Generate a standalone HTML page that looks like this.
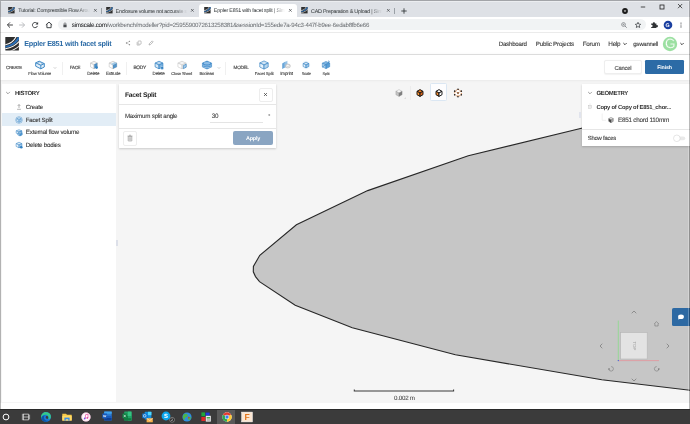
<!DOCTYPE html>
<html>
<head>
<meta charset="utf-8">
<title>Eppler E851 with facet split</title>
<style>
html,body{margin:0;padding:0;}
body{width:690px;height:424px;overflow:hidden;position:relative;background:#f5f5f5;text-rendering:geometricPrecision;font-family:"Liberation Sans",sans-serif;color:#333;}
.a{position:absolute;white-space:nowrap;box-sizing:border-box;}
.t{position:absolute;white-space:nowrap;line-height:1.15;-webkit-text-stroke:0.12px currentColor;}
svg{position:absolute;overflow:visible;}
#tabbar{left:0;top:0;width:690px;height:17px;background:#dee1e6;}
#acttab{left:198.5px;top:3.5px;width:98.5px;height:14px;background:#fff;border-radius:3px 3px 0 0;}
#addr{left:0;top:17px;width:690px;height:16px;background:#fff;}
#pill{left:58px;top:19.3px;width:587.5px;height:11.2px;border-radius:5.6px;background:#f1f3f4;}
#hdr{left:0;top:33px;width:690px;height:22px;background:#fff;border-bottom:1px solid #e4e4e4;}
#tool{left:0;top:55px;width:690px;height:25px;background:#fff;box-shadow:0 0 3px rgba(0,0,0,.09);}
#left{left:1.7px;top:83.8px;width:114px;height:318px;background:#fff;}
#rowsel{left:1.7px;top:113.3px;width:114px;height:12.5px;background:#e2edf6;}
#dlg{left:119.1px;top:83.7px;width:156.6px;height:64.2px;background:#fff;box-shadow:0 0.5px 2px rgba(0,0,0,.18);}
#geo{left:582px;top:84px;width:108px;height:61.5px;background:#fff;box-shadow:0 0.5px 2px rgba(0,0,0,.18);}
#bottom{left:0;top:402.8px;width:690px;height:6.2px;background:#fff;}
#task{left:0;top:409px;width:690px;height:15px;background:#3b3b3b;border-top:1px solid #2a2a2a;}
.sep{width:0.6px;background:#e2e2e2;}
.hl{height:0.6px;background:#e6e6e6;}
</style>
</head>
<body>
<!-- browser chrome -->
<div class="a" id="tabbar"></div>
<div class="a" id="acttab"></div>
<div class="a" id="addr"></div>
<div class="a" id="pill"></div>
<div class="a" style="left:0;top:32px;width:690px;height:1px;background:#ebebeb"></div>
<!-- app -->
<div class="a" id="hdr"></div>
<div class="a" id="tool"></div>
<div class="a" id="left"></div>
<div class="a" id="rowsel"></div>
<!-- viewport geometry -->
<svg id="view" style="left:0;top:0" width="690" height="424" viewBox="0 0 690 424">
<path d="M692 101.5 L582.5 128 L468.3 155.8 L367.7 190.6 L296.4 224.8 L259.8 255.3 L253.4 266.4 L253.3 271.8 L255.5 276.6 L259.5 281.6 L295.2 305.3 L352.3 327.7 L455.4 354.7 L601.8 379.8 L692 390.5 Z" fill="#c6c6c6" stroke="#272727" stroke-width="1.12" stroke-linejoin="miter"/>
<!-- scale bar -->
<path d="M354.3 389.4 V390.9 H453.6 V389.4" fill="none" stroke="#3a3a3a" stroke-width="1.05"/>
</svg>
<div class="a" id="dlg"></div>
<div class="a" id="geo"></div>
<div class="a" style="left:116px;top:240px;width:2px;height:6px;background:#dde0e9"></div><div class="a" style="left:578.6px;top:112px;width:2px;height:6px;background:#e1e4ed"></div>
<svg style="left:8.30px;top:7.20px" width="6.8" height="6.4" viewBox="0 0 14 14"><rect width="14" height="14" fill="#2e2e2e"/><path d="M0 7.2 C4.5 6.4 8.5 3.8 10.2 0 L11.8 0 C9.4 4.6 5 7.8 0 8.7 Z" fill="#fff" opacity=".9"/><path d="M0 9.2 C5.5 8.4 10.5 5 12.8 0 L14 0 L14 3 C11 7.6 5.5 10.5 0 11.2 Z" fill="#2a6fb8"/><path d="M0 11.6 C6 10.8 11 8 14 4.2 L14 5.8 C11 9.2 6 12 0 12.8 Z" fill="#fff" opacity=".9"/></svg>
<svg style="left:106.00px;top:7.20px" width="6.8" height="6.4" viewBox="0 0 14 14"><rect width="14" height="14" fill="#2e2e2e"/><path d="M0 7.2 C4.5 6.4 8.5 3.8 10.2 0 L11.8 0 C9.4 4.6 5 7.8 0 8.7 Z" fill="#fff" opacity=".9"/><path d="M0 9.2 C5.5 8.4 10.5 5 12.8 0 L14 0 L14 3 C11 7.6 5.5 10.5 0 11.2 Z" fill="#2a6fb8"/><path d="M0 11.6 C6 10.8 11 8 14 4.2 L14 5.8 C11 9.2 6 12 0 12.8 Z" fill="#fff" opacity=".9"/></svg>
<svg style="left:203.80px;top:7.20px" width="6.8" height="6.4" viewBox="0 0 14 14"><rect width="14" height="14" fill="#2e2e2e"/><path d="M0 7.2 C4.5 6.4 8.5 3.8 10.2 0 L11.8 0 C9.4 4.6 5 7.8 0 8.7 Z" fill="#fff" opacity=".9"/><path d="M0 9.2 C5.5 8.4 10.5 5 12.8 0 L14 0 L14 3 C11 7.6 5.5 10.5 0 11.2 Z" fill="#2a6fb8"/><path d="M0 11.6 C6 10.8 11 8 14 4.2 L14 5.8 C11 9.2 6 12 0 12.8 Z" fill="#fff" opacity=".9"/></svg>
<svg style="left:301.30px;top:7.20px" width="6.8" height="6.4" viewBox="0 0 14 14"><rect width="14" height="14" fill="#2e2e2e"/><path d="M0 7.2 C4.5 6.4 8.5 3.8 10.2 0 L11.8 0 C9.4 4.6 5 7.8 0 8.7 Z" fill="#fff" opacity=".9"/><path d="M0 9.2 C5.5 8.4 10.5 5 12.8 0 L14 0 L14 3 C11 7.6 5.5 10.5 0 11.2 Z" fill="#2a6fb8"/><path d="M0 11.6 C6 10.8 11 8 14 4.2 L14 5.8 C11 9.2 6 12 0 12.8 Z" fill="#fff" opacity=".9"/></svg>
<svg style="left:93.85px;top:9.35px" width="2.7" height="2.7" viewBox="0 0 2.7 2.7"><path d="M0 0L2.7 2.7 M2.7 0L0 2.7" stroke="#3c4043" stroke-width="0.65" fill="none"/></svg>
<svg style="left:191.45px;top:9.35px" width="2.7" height="2.7" viewBox="0 0 2.7 2.7"><path d="M0 0L2.7 2.7 M2.7 0L0 2.7" stroke="#3c4043" stroke-width="0.65" fill="none"/></svg>
<svg style="left:289.05px;top:9.35px" width="2.7" height="2.7" viewBox="0 0 2.7 2.7"><path d="M0 0L2.7 2.7 M2.7 0L0 2.7" stroke="#3c4043" stroke-width="0.65" fill="none"/></svg>
<svg style="left:386.65px;top:9.35px" width="2.7" height="2.7" viewBox="0 0 2.7 2.7"><path d="M0 0L2.7 2.7 M2.7 0L0 2.7" stroke="#3c4043" stroke-width="0.65" fill="none"/></svg>
<div class="a" style="left:101.15px;top:7.50px;width:0.5px;height:6.50px;background:#9aa0a6"></div>
<div class="a" style="left:394.45px;top:7.50px;width:0.5px;height:6.50px;background:#9aa0a6"></div>
<svg style="left:403.50px;top:10.50px" width="1" height="1" viewBox="0 0 1 1"><path d="M-2.7 0H2.7M0 -2.7V2.7" stroke="#2e3134" stroke-width="0.85"/></svg>
<svg style="left:624.70px;top:10.70px" width="1" height="1" viewBox="0 0 1 1"><circle r="2.9" fill="#1b1b1b"/><path d="M-1.3 -0.6H1.3L0 1.1Z" fill="#fff"/></svg>
<svg style="left:642.80px;top:6.50px" width="1" height="1" viewBox="0 0 1 1"><path d="M-2.2 0H2.2" stroke="#222" stroke-width="0.8"/></svg>
<svg style="left:661.50px;top:6.50px" width="1" height="1" viewBox="0 0 1 1"><rect x="-2" y="-2" width="4" height="4" fill="none" stroke="#222" stroke-width="0.8"/></svg>
<svg style="left:678.20px;top:4.20px" width="4.2" height="4.2" viewBox="0 0 4.2 4.2"><path d="M0 0L4.2 4.2 M4.2 0L0 4.2" stroke="#222" stroke-width="0.75" fill="none"/></svg>
<svg style="left:9.50px;top:25.10px" width="1" height="1" viewBox="0 0 1 1"><path d="M2.9 0H-2.4M0 -2.6L-2.6 0L0 2.6" stroke="#2c2e30" stroke-width="0.9" fill="none"/></svg>
<svg style="left:22.30px;top:25.10px" width="1" height="1" viewBox="0 0 1 1"><path d="M-2.9 0H2.4M0 -2.6L2.6 0L0 2.6" stroke="#b4b7ba" stroke-width="0.9" fill="none"/></svg>
<svg style="left:35.40px;top:25.00px" width="1" height="1" viewBox="0 0 1 1"><path d="M2.2 -1.4A2.6 2.6 0 1 0 2.5 0.9" stroke="#3a3d40" stroke-width="0.95" fill="none"/><path d="M3.1 -3.1V-0.4H0.4Z" fill="#3a3d40"/></svg>
<svg style="left:48.60px;top:25.00px" width="1" height="1" viewBox="0 0 1 1"><path d="M-3.1 -0.1L0 -2.9L3.1 -0.1M-2.1 -0.8V2.7H2.1V-0.8" stroke="#3a3d40" stroke-width="0.95" fill="none" stroke-linejoin="round"/></svg>
<svg style="left:64.70px;top:25.00px" width="1" height="1" viewBox="0 0 1 1"><rect x="-1.6" y="-0.5" width="3.2" height="2.7" rx="0.3" fill="#4a4d50"/><path d="M-0.9 -0.5V-1.3A0.9 0.9 0 0 1 0.9 -1.3V-0.5" stroke="#4a4d50" stroke-width="0.6" fill="none"/></svg>
<svg style="left:623.50px;top:25.00px" width="1" height="1" viewBox="0 0 1 1"><circle cx="-0.5" cy="-0.5" r="1.9" fill="none" stroke="#5f6368" stroke-width="0.6"/><path d="M-1.5 -0.5H0.5M-0.5 -1.5V0.5" stroke="#5f6368" stroke-width="0.4"/><path d="M0.9 0.9L2.7 2.7" stroke="#5f6368" stroke-width="0.7"/></svg>
<svg style="left:638.30px;top:25.00px" width="1" height="1" viewBox="0 0 1 1"><path d="M0 -2.7L0.8 -0.9L2.7 -0.7L1.3 0.6L1.7 2.5L0 1.5L-1.7 2.5L-1.3 0.6L-2.7 -0.7L-0.8 -0.9Z" fill="none" stroke="#3a3d40" stroke-width="0.75" stroke-linejoin="round"/></svg>
<svg style="left:654.00px;top:25.10px" width="1" height="1" viewBox="0 0 1 1"><path d="M-2.8 -1.4H-1.1A1.05 1.05 0 1 1 0.9 -1.4H2.4V0.2A1.05 1.05 0 1 1 2.4 2.1V3.1H-2.8V1.9A1.05 1.05 0 1 0 -2.8 -0.1Z" fill="#2f3235"/></svg>
<svg style="left:667.50px;top:24.80px" width="1" height="1" viewBox="0 0 1 1"><circle r="4.3" fill="#1a3fa0"/></svg>
<svg style="left:680.70px;top:25.00px" width="1" height="1" viewBox="0 0 1 1"><circle cy="-1.9" r="0.62" fill="#4a4d51"/><circle r="0.62" fill="#4a4d51"/><circle cy="1.9" r="0.62" fill="#4a4d51"/></svg>
<svg style="left:5.00px;top:37.00px" width="14.2" height="13.6" viewBox="0 0 14 14"><rect width="14" height="14" rx="0.6" fill="#2e2e2e"/><path d="M0 7.4 C4.5 6.6 8.5 3.8 10.4 0 L11.6 0 C9.4 4.6 5 7.6 0 8.5 Z" fill="#fff"/><path d="M0 9.2 C5.5 8.4 10.5 5 12.8 0 L14 0 L14 2.8 C11 7.4 5.5 10.3 0 11 Z" fill="#2a6fb8"/><path d="M0 11.6 C6 10.8 11 8 14 4.2 L14 5.6 C11 9 6 11.8 0 12.6 Z" fill="#fff"/><path d="M4.8 14 C8.6 13 11.6 11.2 14 8.8 L14 10 C12 11.8 9.6 13.2 7.2 14 Z" fill="#fff"/></svg>
<svg style="left:127.70px;top:43.40px" width="1" height="1" viewBox="0 0 1 1"><circle cx="1.5" cy="-1.7" r="0.65" fill="#8a8a8a"/><circle cx="-1.5" cy="0" r="0.65" fill="#8a8a8a"/><circle cx="1.5" cy="1.7" r="0.65" fill="#8a8a8a"/><path d="M1.5 -1.7L-1.5 0L1.5 1.7" stroke="#8a8a8a" stroke-width="0.4" fill="none"/></svg>
<svg style="left:139.20px;top:43.40px" width="1" height="1" viewBox="0 0 1 1"><rect x="-0.9" y="-2" width="3" height="3.2" rx="0.4" fill="none" stroke="#8a8a8a" stroke-width="0.5"/><path d="M-1.9 -0.9V2.1H0.7" stroke="#8a8a8a" stroke-width="0.5" fill="none"/></svg>
<svg style="left:150.90px;top:43.40px" width="1" height="1" viewBox="0 0 1 1"><path d="M-2 2L-1.6 0.6L1.2 -2.1L2.2 -1.1L-0.6 1.6Z" fill="none" stroke="#8a8a8a" stroke-width="0.55" stroke-linejoin="round"/></svg>
<svg style="left:625.00px;top:44.30px" width="1" height="1" viewBox="0 0 1 1"><path d="M-1.35 -0.675 L0 0.675 L1.35 -0.675" stroke="#2a2a2a" stroke-width="0.9" fill="none" stroke-linecap="round" stroke-linejoin="round"/></svg>
<svg style="left:681.90px;top:44.30px" width="1" height="1" viewBox="0 0 1 1"><path d="M-1.35 -0.675 L0 0.675 L1.35 -0.675" stroke="#2a2a2a" stroke-width="0.9" fill="none" stroke-linecap="round" stroke-linejoin="round"/></svg>
<svg style="left:669.70px;top:43.60px" width="1" height="1" viewBox="0 0 1 1"><circle r="7.2" fill="#9ce0a2"/></svg>
<div class="a" style="left:603.6px;top:60.4px;width:38.3px;height:14px;background:#fff;border:1px solid #eeeeee;border-radius:2px;box-shadow:0 0.5px 1px rgba(0,0,0,.05)"></div>
<div class="a" style="left:644.8px;top:60.4px;width:38.8px;height:14px;background:#2c6ba6;border-radius:1.3px"></div>
<svg style="left:39.80px;top:64.90px" width="1" height="1" viewBox="0 0 1 1"><path d="M-4.3 -2.2 L-0.8 -3.8 L4.3 -1.4 L4.3 2.0 L0.8 3.8 L-4.3 1.2 Z" fill="#e6f1fa" stroke="#2f7fc1" stroke-width="0.9" stroke-linejoin="round"/><path d="M-4.3 -2.2 L0.8 0.3 L4.3 -1.4 M0.8 0.3 L0.8 3.8" fill="none" stroke="#2f7fc1" stroke-width="0.9"/><path d="M-2.6 -1.9 L-0.6 -2.8 L2.6 -1.3 L0.7 -0.4 Z" fill="#fff" stroke="#2f7fc1" stroke-width="0.4"/></svg>
<svg style="left:54.60px;top:67.80px" width="1" height="1" viewBox="0 0 1 1"><path d="M-1.05 -0.525 L0 0.525 L1.05 -0.525" stroke="#999" stroke-width="0.45" fill="none" stroke-linecap="round" stroke-linejoin="round"/></svg>
<div class="a" style="left:62.00px;top:61.50px;width:0.6px;height:13.50px;background:#f0f0f0"></div>
<svg style="left:93.60px;top:65.20px" width="1" height="1" viewBox="0 0 1 1"><path d="M0 -3.8 L3.5 -1.9 L0 0 L-3.5 -1.9 Z" fill="#f2f2f2" stroke="#b5b5b5" stroke-width="0.5" stroke-linejoin="round"/><path d="M-3.5 -1.9 L0 0 L0 3.8 L-3.5 1.9 Z" fill="#fff" stroke="#b5b5b5" stroke-width="0.5" stroke-linejoin="round"/><path d="M3.5 -1.9 L0 0 L0 3.8 L3.5 1.9 Z" fill="#e6e6e6" stroke="#b5b5b5" stroke-width="0.5" stroke-linejoin="round"/><path d="M0.3 -0.8L3.2 -2.1V1.9L0.3 3.4Z" fill="#2f7fc1" opacity=".85"/><circle cx="2.6" cy="2.6" r="1.3" fill="#2f7fc1"/></svg>
<svg style="left:113.30px;top:65.20px" width="1" height="1" viewBox="0 0 1 1"><path d="M0 -3.8 L3.8 -1.9 L0 0 L-3.8 -1.9 Z" fill="#f2f2f2" stroke="#b5b5b5" stroke-width="0.5" stroke-linejoin="round"/><path d="M-3.8 -1.9 L0 0 L0 3.8 L-3.8 1.9 Z" fill="#fff" stroke="#b5b5b5" stroke-width="0.5" stroke-linejoin="round"/><path d="M3.8 -1.9 L0 0 L0 3.8 L3.8 1.9 Z" fill="#e6e6e6" stroke="#b5b5b5" stroke-width="0.5" stroke-linejoin="round"/><path d="M0 0L3.8 -1.9V1.9L0 3.8Z" fill="#2f7fc1" opacity=".8"/><path d="M0 0L-2 -1L1.8 -2.9L3.8 -1.9Z" fill="#8fc0e6" opacity=".8"/></svg>
<div class="a" style="left:126.40px;top:61.50px;width:0.6px;height:13.50px;background:#f0f0f0"></div>
<svg style="left:158.60px;top:65.00px" width="1" height="1" viewBox="0 0 1 1"><path d="M0 -3.8 L3.9 -1.9 L0 0 L-3.9 -1.9 Z" fill="#b9d6ef" stroke="#2f7fc1" stroke-width="0.7" stroke-linejoin="round"/><path d="M-3.9 -1.9 L0 0 L0 3.8 L-3.9 1.9 Z" fill="#d9e9f6" stroke="#2f7fc1" stroke-width="0.7" stroke-linejoin="round"/><path d="M3.9 -1.9 L0 0 L0 3.8 L3.9 1.9 Z" fill="#7db3e0" stroke="#2f7fc1" stroke-width="0.7" stroke-linejoin="round"/><circle cx="3.1" cy="2.9" r="1.5" fill="#2f7fc1" stroke="#fff" stroke-width="0.3"/></svg>
<svg style="left:182.00px;top:65.00px" width="1" height="1" viewBox="0 0 1 1"><path d="M0 -3.8 L4.1 -1.9 L0 0 L-4.1 -1.9 Z" fill="#f4f4f4" stroke="#bdbdbd" stroke-width="0.5" stroke-linejoin="round"/><path d="M-4.1 -1.9 L0 0 L0 3.8 L-4.1 1.9 Z" fill="#fff" stroke="#bdbdbd" stroke-width="0.5" stroke-linejoin="round"/><path d="M4.1 -1.9 L0 0 L0 3.8 L4.1 1.9 Z" fill="#ececec" stroke="#bdbdbd" stroke-width="0.5" stroke-linejoin="round"/><path d="M1.4 0.6L4.2 -0.8V2.2L1.4 3.7Z" fill="#a9cdea" stroke="#2f7fc1" stroke-width="0.6"/></svg>
<svg style="left:206.80px;top:65.00px" width="1" height="1" viewBox="0 0 1 1"><path d="M0 -4L4.6 -2V2L0 4L-4.6 2V-2Z" fill="#3f8acb" stroke="#2f7fc1" stroke-width="0.5" stroke-linejoin="round"/><ellipse cx="0" cy="-1.7" rx="3.3" ry="1.25" fill="#8ebde6"/><path d="M-4.4 -0.2C-2 1.5 2 1.5 4.4 -0.2M-4.4 1.5C-2 3.1 2 3.1 4.4 1.5" stroke="#dcebf8" stroke-width="0.55" fill="none"/></svg>
<svg style="left:218.60px;top:67.80px" width="1" height="1" viewBox="0 0 1 1"><path d="M-1.05 -0.525 L0 0.525 L1.05 -0.525" stroke="#999" stroke-width="0.45" fill="none" stroke-linecap="round" stroke-linejoin="round"/></svg>
<div class="a" style="left:225.30px;top:61.50px;width:0.6px;height:13.50px;background:#f0f0f0"></div>
<svg style="left:264.10px;top:65.00px" width="1" height="1" viewBox="0 0 1 1"><path d="M0 -4.1 L4.2 -2.05 L0 0 L-4.2 -2.05 Z" fill="#cfe3f4" stroke="#2f7fc1" stroke-width="0.65" stroke-linejoin="round"/><path d="M-4.2 -2.05 L0 0 L0 4.1 L-4.2 2.05 Z" fill="#e8f2fb" stroke="#2f7fc1" stroke-width="0.65" stroke-linejoin="round"/><path d="M4.2 -2.05 L0 0 L0 4.1 L4.2 2.05 Z" fill="#b6d5ee" stroke="#2f7fc1" stroke-width="0.65" stroke-linejoin="round"/></svg>
<svg style="left:286.30px;top:65.00px" width="1" height="1" viewBox="0 0 1 1"><path d="M-3.8 -1.6L-0.6 -3.4V2.2L-3.8 3.9Z" fill="#6aa6d8"/><path d="M-1.8 -2.6L1.4 -4.2V1.2L-1.8 2.9Z" fill="#8bbbe3" opacity=".9"/><ellipse cx="1.8" cy="1.0" rx="2.6" ry="2.0" fill="#e9e9e9" stroke="#a8a8a8" stroke-width="0.5"/><ellipse cx="1.8" cy="0.4" rx="1.6" ry="0.9" fill="#fff" stroke="#a8a8a8" stroke-width="0.35"/></svg>
<svg style="left:306.20px;top:65.00px" width="1" height="1" viewBox="0 0 1 1"><circle r="4.3" fill="#f3f8fc"/></svg>
<svg style="left:306.20px;top:65.00px" width="1" height="1" viewBox="0 0 1 1"><path d="M0 -2.9 L2.8 -1.45 L0 0 L-2.8 -1.45 Z" fill="#cfe3f4" stroke="#2f7fc1" stroke-width="0.6" stroke-linejoin="round"/><path d="M-2.8 -1.45 L0 0 L0 2.9 L-2.8 1.45 Z" fill="#e8f2fb" stroke="#2f7fc1" stroke-width="0.6" stroke-linejoin="round"/><path d="M2.8 -1.45 L0 0 L0 2.9 L2.8 1.45 Z" fill="#9fc8ea" stroke="#2f7fc1" stroke-width="0.6" stroke-linejoin="round"/></svg>
<svg style="left:326.40px;top:65.40px" width="1" height="1" viewBox="0 0 1 1"><path d="M0 -3.6 L3.7 -1.8 L0 0 L-3.7 -1.8 Z" fill="#7fb4e0" stroke="#2f7fc1" stroke-width="0.5" stroke-linejoin="round"/><path d="M-3.7 -1.8 L0 0 L0 3.6 L-3.7 1.8 Z" fill="#a9cdea" stroke="#2f7fc1" stroke-width="0.5" stroke-linejoin="round"/><path d="M3.7 -1.8 L0 0 L0 3.6 L3.7 1.8 Z" fill="#5a9fd6" stroke="#2f7fc1" stroke-width="0.5" stroke-linejoin="round"/><path d="M-3.9 2.4L3.9 -3.6" stroke="#2f7fc1" stroke-width="0.6"/><path d="M2.6 -4.6V-2.2" stroke="#2f7fc1" stroke-width="0.5"/></svg>
<svg style="left:8.20px;top:92.60px" width="1" height="1" viewBox="0 0 1 1"><path d="M-1.6 -0.8 L0 0.8 L1.6 -0.8" stroke="#555" stroke-width="0.55" fill="none" stroke-linecap="round" stroke-linejoin="round"/></svg>
<svg style="left:19.20px;top:107.20px" width="1" height="1" viewBox="0 0 1 1"><path d="M0 1V-2.4M-1.3 -1.1L0 -2.5L1.3 -1.1M-1.9 2.3H1.9" stroke="#777" stroke-width="0.55" fill="none"/></svg>
<svg style="left:19.30px;top:119.70px" width="1" height="1" viewBox="0 0 1 1"><circle r="3.3" fill="#f1f6fb" stroke="#2f7fc1" stroke-width="0.45"/></svg>
<svg style="left:19.30px;top:119.70px" width="1" height="1" viewBox="0 0 1 1"><path d="M0 -2.3 L2.2 -1.15 L0 0 L-2.2 -1.15 Z" fill="#cfe3f4" stroke="#2f7fc1" stroke-width="0.45" stroke-linejoin="round"/><path d="M-2.2 -1.15 L0 0 L0 2.3 L-2.2 1.15 Z" fill="#e8f2fb" stroke="#2f7fc1" stroke-width="0.45" stroke-linejoin="round"/><path d="M2.2 -1.15 L0 0 L0 2.3 L2.2 1.15 Z" fill="#b6d5ee" stroke="#2f7fc1" stroke-width="0.45" stroke-linejoin="round"/></svg>
<svg style="left:18.60px;top:131.60px" width="1" height="1" viewBox="0 0 1 1"><path d="M0 -2.3 L2.8 -1.15 L0 0 L-2.8 -1.15 Z" fill="#d6e8f6" stroke="#2f7fc1" stroke-width="0.5" stroke-linejoin="round"/><path d="M-2.8 -1.15 L0 0 L0 2.3 L-2.8 1.15 Z" fill="#eef5fb" stroke="#2f7fc1" stroke-width="0.5" stroke-linejoin="round"/><path d="M2.8 -1.15 L0 0 L0 2.3 L2.8 1.15 Z" fill="#7fb4e0" stroke="#2f7fc1" stroke-width="0.5" stroke-linejoin="round"/></svg>
<svg style="left:20.40px;top:133.60px" width="1" height="1" viewBox="0 0 1 1"><path d="M0 -1.9 L2.2 -0.95 L0 0 L-2.2 -0.95 Z" fill="#d6e8f6" stroke="#2f7fc1" stroke-width="0.45" stroke-linejoin="round"/><path d="M-2.2 -0.95 L0 0 L0 1.9 L-2.2 0.95 Z" fill="#a9cdea" stroke="#2f7fc1" stroke-width="0.45" stroke-linejoin="round"/><path d="M2.2 -0.95 L0 0 L0 1.9 L2.2 0.95 Z" fill="#5a9fd6" stroke="#2f7fc1" stroke-width="0.45" stroke-linejoin="round"/></svg>
<svg style="left:18.80px;top:144.50px" width="1" height="1" viewBox="0 0 1 1"><path d="M0 -2.8 L2.9 -1.4 L0 0 L-2.9 -1.4 Z" fill="#d6e8f6" stroke="#2f7fc1" stroke-width="0.5" stroke-linejoin="round"/><path d="M-2.9 -1.4 L0 0 L0 2.8 L-2.9 1.4 Z" fill="#eef5fb" stroke="#2f7fc1" stroke-width="0.5" stroke-linejoin="round"/><path d="M2.9 -1.4 L0 0 L0 2.8 L2.9 1.4 Z" fill="#9fc8ea" stroke="#2f7fc1" stroke-width="0.5" stroke-linejoin="round"/><circle cx="2.3" cy="2.2" r="1.3" fill="#2f7fc1"/></svg>
<div class="a" style="left:258.6px;top:87.6px;width:14px;height:14px;background:#fff;border:1px solid #ededed;border-radius:2px"></div>
<svg style="left:264.10px;top:93.00px" width="3" height="3" viewBox="0 0 3 3"><path d="M0 0L3 3 M3 0L0 3" stroke="#3a3a3a" stroke-width="0.7" fill="none"/></svg>
<div class="a" style="left:119.10px;top:103.80px;width:156.60px;height:0.6px;background:#e6e6e6"></div>
<div class="a" style="left:210.40px;top:122.15px;width:52.20px;height:0.5px;background:#e4e4e4"></div>
<div class="a" style="left:119.10px;top:128.00px;width:156.60px;height:0.6px;background:#e6e6e6"></div>
<div class="a" style="left:122.6px;top:131.4px;width:14.2px;height:14.2px;background:#fff;border:1px solid #ededed;border-radius:2px"></div>
<svg style="left:129.70px;top:138.40px" width="1" height="1" viewBox="0 0 1 1"><g transform="scale(1.2)"><path d="M-1.6 -1.3H1.6V2.2A0.4 0.4 0 0 1 1.2 2.6H-1.2A0.4 0.4 0 0 1 -1.6 2.2Z" fill="#dcdcdc" stroke="#919191" stroke-width="0.4"/><path d="M-0.6 -0.4V1.8M0.6 -0.4V1.8" stroke="#a5a5a5" stroke-width="0.35"/><path d="M-2.1 -1.6H2.1M-0.8 -2.3H0.8" stroke="#8f8f8f" stroke-width="0.5"/></g></svg>
<div class="a" style="left:233px;top:131px;width:40px;height:14.2px;background:#8aa5c2;border-radius:2px"></div>
<svg style="left:399.30px;top:92.60px" width="1" height="1" viewBox="0 0 1 1"><path d="M0 -3.4 L3.1 -1.7 L0 0 L-3.1 -1.7 Z" fill="#f6f6f6" stroke="#8e8e8e" stroke-width="0.35" stroke-linejoin="round"/><path d="M-3.1 -1.7 L0 0 L0 3.4 L-3.1 1.7 Z" fill="#c4c4c4" stroke="#8e8e8e" stroke-width="0.35" stroke-linejoin="round"/><path d="M3.1 -1.7 L0 0 L0 3.4 L3.1 1.7 Z" fill="#7e7e7e" stroke="#8e8e8e" stroke-width="0.35" stroke-linejoin="round"/></svg>
<svg style="left:405.20px;top:98.00px" width="1" height="1" viewBox="0 0 1 1"><path d="M0.7 -0.7V0.7H-0.7Z" fill="#c4c4c4"/></svg>
<div class="a" style="left:410.20px;top:86.00px;width:0.6px;height:14.00px;background:#ececec"></div>
<svg style="left:419.50px;top:92.80px" width="1" height="1" viewBox="0 0 1 1"><path d="M0 -3.4 L3 -1.7 L0 0 L-3 -1.7 Z" fill="#ee7a1c" stroke="#141414" stroke-width="0.95" stroke-linejoin="round"/><path d="M-3 -1.7 L0 0 L0 3.4 L-3 1.7 Z" fill="#f58f30" stroke="#141414" stroke-width="0.95" stroke-linejoin="round"/><path d="M3 -1.7 L0 0 L0 3.4 L3 1.7 Z" fill="#d9651a" stroke="#141414" stroke-width="0.95" stroke-linejoin="round"/></svg>
<div class="a" style="left:430px;top:83.4px;width:17.3px;height:17.8px;background:#fdfdfe;border:0.7px solid #dbe7f3;border-radius:1.5px"></div>
<svg style="left:438.70px;top:92.80px" width="1" height="1" viewBox="0 0 1 1"><path d="M0 -3.4 L3 -1.7 L0 0 L-3 -1.7 Z" fill="#fff" stroke="#141414" stroke-width="0.95" stroke-linejoin="round"/><path d="M-3 -1.7 L0 0 L0 3.4 L-3 1.7 Z" fill="#f08a2e" stroke="#141414" stroke-width="0.95" stroke-linejoin="round"/><path d="M3 -1.7 L0 0 L0 3.4 L3 1.7 Z" fill="#fff" stroke="#141414" stroke-width="0.95" stroke-linejoin="round"/></svg>
<svg style="left:458.00px;top:92.80px" width="1" height="1" viewBox="0 0 1 1"><path d="M0 -3.7L3.3 -1.85V1.85L0 3.7L-3.3 1.85V-1.85Z" fill="#fff" stroke="#fff" stroke-width="0.6"/><path d="M0 -3.7L3.3 -1.85V1.85L0 3.7L-3.3 1.85V-1.85Z M0 0V3.7M0 0L3.3 -1.85M0 0L-3.3 -1.85" fill="none" stroke="#d2691e" stroke-width="0.95" stroke-dasharray="0.9 0.95"/><g fill="#1a1a1a"><circle cx="0" cy="-3.7" r="0.8"/><circle cx="3.3" cy="-1.85" r="0.8"/><circle cx="3.3" cy="1.85" r="0.8"/><circle cx="0" cy="3.7" r="0.8"/><circle cx="-3.3" cy="1.85" r="0.8"/><circle cx="-3.3" cy="-1.85" r="0.8"/><circle cx="0" cy="0" r="0.7"/></g></svg>
<svg style="left:589.50px;top:92.60px" width="1" height="1" viewBox="0 0 1 1"><path d="M-1.6 -0.8 L0 0.8 L1.6 -0.8" stroke="#555" stroke-width="0.55" fill="none" stroke-linecap="round" stroke-linejoin="round"/></svg>
<svg style="left:589.80px;top:107.00px" width="1" height="1" viewBox="0 0 1 1"><path d="M0 -3.6V-1.3" stroke="#d0d0d0" stroke-width="0.4"/><rect x="-1.3" y="-1.3" width="2.6" height="2.6" fill="#fff" stroke="#bdbdbd" stroke-width="0.45"/><path d="M-0.7 0H0.7" stroke="#888" stroke-width="0.45"/></svg>
<svg style="left:0.00px;top:0.00px" width="1" height="1" viewBox="0 0 1 1"><path d="M602.2 113.5V120.3H606" stroke="#d8d8d8" stroke-width="0.4" fill="none"/></svg>
<svg style="left:611.40px;top:119.80px" width="1" height="1" viewBox="0 0 1 1"><path d="M0 -2.7 L2.3 -1.35 L0 0 L-2.3 -1.35 Z" fill="#ddd" stroke="#555" stroke-width="0.35" stroke-linejoin="round"/><path d="M-2.3 -1.35 L0 0 L0 2.7 L-2.3 1.35 Z" fill="#444" stroke="#555" stroke-width="0.35" stroke-linejoin="round"/><path d="M2.3 -1.35 L0 0 L0 2.7 L2.3 1.35 Z" fill="#aaa" stroke="#555" stroke-width="0.35" stroke-linejoin="round"/></svg>
<div class="a" style="left:582.00px;top:129.10px;width:108.00px;height:0.6px;background:#e6e6e6"></div>
<svg style="left:0.00px;top:0.00px" width="1" height="1" viewBox="0 0 1 1"><rect x="675" y="136.4" width="10.2" height="3.8" rx="1.9" fill="#e9e9e9"/><circle cx="676.8" cy="138.3" r="3.3" fill="#fff" stroke="#cdcdcd" stroke-width="0.5"/></svg>
<svg style="left:0.00px;top:0.00px;will-change:transform" width="1" height="1" viewBox="0 0 1 1"><path d="M618.3 320.6V360.6" stroke="#6fe66f" stroke-width="0.55"/><path d="M618.3 360.6H659" stroke="#f27c86" stroke-width="0.55"/><circle cx="618.3" cy="360.6" r="0.7" fill="#4060e0"/><rect x="620.6" y="332.4" width="26.6" height="26.6" fill="#e3e3e3" stroke="#b4b4b4" stroke-width="0.6"/><text x="0" y="0" transform="translate(632.6 345.9) rotate(90)" text-anchor="middle" font-family="Liberation Sans, sans-serif" font-size="4.3" fill="#a2a2a2">TOP</text><path d="M654.2 323.9L656.5 321.6L658.8 323.9M654.9 323.6V326H658.1V323.6" stroke="#666" stroke-width="0.5" fill="none"/><path d="M611.1 366.5A2.3 2.3 0 1 1 608.9 369.4" stroke="#666" stroke-width="0.45" fill="none"/><path d="M608.1 368.4L609 370.2L610 368.6Z" fill="#666"/><path d="M656.7 366.5A2.3 2.3 0 1 0 658.9 369.4" stroke="#666" stroke-width="0.45" fill="none"/><path d="M659.7 368.4L658.8 370.2L657.8 368.6Z" fill="#666"/></svg>
<svg style="left:634.40px;top:312.00px" width="1" height="1" viewBox="0 0 1 1"><path d="M-2 1 L0 -1 L2 1" stroke="#666" stroke-width="0.6" fill="none" stroke-linecap="round" stroke-linejoin="round"/></svg>
<svg style="left:634.40px;top:379.60px" width="1" height="1" viewBox="0 0 1 1"><path d="M-2 -1 L0 1 L2 -1" stroke="#666" stroke-width="0.6" fill="none" stroke-linecap="round" stroke-linejoin="round"/></svg>
<svg style="left:600.80px;top:345.70px" width="1" height="1" viewBox="0 0 1 1"><path d="M1 -2 L-1 0 L1 2" stroke="#666" stroke-width="0.6" fill="none" stroke-linecap="round" stroke-linejoin="round"/></svg>
<svg style="left:668.30px;top:345.70px" width="1" height="1" viewBox="0 0 1 1"><path d="M-1 -2 L1 0 L-1 2" stroke="#666" stroke-width="0.6" fill="none" stroke-linecap="round" stroke-linejoin="round"/></svg>
<div class="a" style="left:671.9px;top:307.7px;width:18.1px;height:17.9px;background:#2d69a3;border-radius:1.6px 0 0 1.6px"></div>
<svg style="left:680.70px;top:316.60px" width="1" height="1" viewBox="0 0 1 1"><ellipse cx="0" cy="-0.3" rx="2.9" ry="2.3" fill="#fff"/><path d="M-2.4 0.6L-2.9 2.6L-0.6 1.7Z" fill="#fff"/></svg>
<div class="a" id="bottom"></div>
<div class="a" id="task"></div>
<svg style="left:6.00px;top:416.80px" width="1" height="1" viewBox="0 0 1 1"><circle r="2.9" fill="none" stroke="#fff" stroke-width="1.0"/></svg>
<svg style="left:25.60px;top:416.80px" width="1" height="1" viewBox="0 0 1 1"><rect x="-2.6" y="-2.9" width="5.2" height="5.8" fill="none" stroke="#e8e8e8" stroke-width="0.7"/><path d="M-2.6 0H2.6" stroke="#e8e8e8" stroke-width="0.7"/><path d="M3.6 -2.4V2.4M-3.6 -3.2V3.2" stroke="#e8e8e8" stroke-width="0.6"/></svg>
<svg style="left:46.30px;top:416.80px" width="1" height="1" viewBox="0 0 1 1"><circle r="4.9" fill="#1b78d6"/><path d="M-3.4 -3.5A4.9 4.9 0 0 1 4.9 0.2C4.6 1.6 3.6 2.3 2.4 2.3C2.9 1.4 2.9 0.2 2.2 -0.8C0.9 -2.6 -1.8 -2.6 -3.4 -1.2C-4.2 -0.4 -4.6 0.6 -4.6 1.6C-5.3 -0.2 -4.8 -2.2 -3.4 -3.5Z" fill="#35c98a"/><path d="M-4.6 1.6C-4.6 -1 -2.6 -1.9 -1.3 -1.5C-2.2 -0.6 -2.3 0.9 -1.5 2.2C-0.6 3.5 1 4 2.6 3.5C1.6 4.6 -0.2 5.1 -1.9 4.5C-3.4 4 -4.4 2.9 -4.6 1.6Z" fill="#0d57a8"/><path d="M-0.3 0.3C-0.3 -0.8 1.1 -1.3 1.9 -0.5C2.4 0.2 2.2 1.2 1.6 1.9C0.6 1.9 -0.3 1.3 -0.3 0.3Z" fill="#3b3b3b"/></svg>
<svg style="left:66.70px;top:416.80px" width="1" height="1" viewBox="0 0 1 1"><path d="M-4.7 -3.2H-1L0 -2.2H4.7V3.6H-4.7Z" fill="#f7c948"/><rect x="-4.7" y="-1.2" width="9.4" height="4.8" fill="#ffd966"/><rect x="-2.6" y="0.6" width="5.2" height="3" fill="#3a8ee6"/><rect x="-1.2" y="2.2" width="2.4" height="1.4" fill="#ffd966"/></svg>
<svg style="left:86.30px;top:416.80px" width="1" height="1" viewBox="0 0 1 1"><circle r="4.6" fill="#fff"/><circle r="4.2" fill="none" stroke="#f0a0c8" stroke-width="0.5"/><path d="M-0.6 1.4V-2.2L2 -2.8V0.8" stroke="#e8409a" stroke-width="0.7" fill="none"/><circle cx="-1.3" cy="1.5" r="0.9" fill="#7a50e0"/><circle cx="1.3" cy="0.9" r="0.9" fill="#e8409a"/></svg>
<svg style="left:106.60px;top:416.30px" width="1" height="1" viewBox="0 0 1 1"><rect x="-2.8" y="-4.4" width="7.5" height="8.8" rx="0.5" fill="#2b7cd3"/><rect x="-2.8" y="-0.2" width="7.5" height="2.3" fill="#185abd"/><rect x="-2.8" y="2.1" width="7.5" height="2.3" rx="0.4" fill="#103f91"/><rect x="-2.8" y="-4.4" width="7.5" height="2.1" fill="#41a5ee"/><rect x="-4.7" y="-2.4" width="4.8" height="4.8" rx="0.4" fill="#185abd"/><path d="M-3.6 -1L-3 1.1L-2.3 -0.6L-1.6 1.1L-1 -1" stroke="#fff" stroke-width="0.55" fill="none"/></svg>
<svg style="left:126.60px;top:416.30px" width="1" height="1" viewBox="0 0 1 1"><rect x="-2.8" y="-4.4" width="7.3" height="8.8" rx="0.5" fill="#21a366"/><rect x="0.9" y="-4.4" width="3.6" height="8.8" fill="#33c481"/><rect x="-2.8" y="0" width="7.3" height="4.4" fill="#107c41"/><rect x="0.9" y="0" width="3.6" height="2.2" fill="#21a366"/><rect x="-4.6" y="-2.4" width="4.8" height="4.8" rx="0.4" fill="#107c41"/><path d="M-3.3 -1.2L-1.2 1.2M-1.2 -1.2L-3.3 1.2" stroke="#fff" stroke-width="0.6"/></svg>
<svg style="left:146.60px;top:416.30px" width="1" height="1" viewBox="0 0 1 1"><rect x="-2.2" y="-4.2" width="6.6" height="7.6" rx="0.5" fill="#1490df"/><rect x="1" y="-4.2" width="3.4" height="3.4" fill="#50d9ff"/><rect x="-2.2" y="-0.8" width="3.2" height="3.4" fill="#0f78d4"/><rect x="-4.7" y="-2.6" width="4.8" height="4.8" rx="0.4" fill="#0f78d4"/><circle cx="-2.3" cy="-0.2" r="1.3" fill="none" stroke="#fff" stroke-width="0.6"/><rect x="-0.4" y="2.2" width="6.2" height="4.1" fill="#f5b14c"/><path d="M-0.4 2.2L2.7 4.6L5.8 2.2" stroke="#fff" stroke-width="0.5" fill="none"/></svg>
<svg style="left:166.30px;top:416.10px;will-change:transform" width="1" height="1" viewBox="0 0 1 1"><circle r="4.4" fill="#0aa6ee"/><text x="0" y="2.1" text-anchor="middle" font-family="Liberation Sans, sans-serif" font-weight="700" font-size="6" fill="#fff">S</text><circle cx="6.1" cy="3.8" r="2.4" fill="#222" stroke="#ddd" stroke-width="0.4"/><text x="6.1" y="5.1" text-anchor="middle" font-family="Liberation Sans, sans-serif" font-size="3.6" fill="#fff">2</text></svg>
<svg style="left:186.70px;top:416.50px" width="1" height="1" viewBox="0 0 1 1"><circle r="4.6" fill="#2f8ede"/><path d="M-3.6 -1.8C-2 -3.8 0 -3.4 0.6 -2C1 -0.6 -0.4 0.4 -1.6 0.6C-2.6 1 -2 2.6 -2.8 3C-4 2 -4.6 0 -3.6 -1.8Z" fill="#4cb648"/><path d="M1.6 -0.4L4.2 0.6L2.6 3.4L0.6 2Z" fill="#4cb648"/><path d="M0.6 -0.4L2.8 0.4L1.8 1.8Z" fill="#e03030"/></svg>
<svg style="left:206.40px;top:416.60px" width="1" height="1" viewBox="0 0 1 1"><rect x="-4.6" y="-4.6" width="3.6" height="3.8" fill="#1fa83a"/><rect x="-0.4" y="-4.4" width="4" height="3" fill="#2038e0"/><rect x="-4.6" y="0" width="4" height="4" fill="#e02828"/><rect x="-0.2" y="-1.2" width="5" height="5.8" fill="#f2f2f2"/><rect x="0.6" y="0" width="3.4" height="1.6" fill="#4fb04f"/><rect x="0.6" y="2.4" width="3.4" height="1.2" fill="#999"/></svg>
<div class="a" style="left:216.8px;top:409.6px;width:18.2px;height:14.4px;background:#595959"></div>
<svg style="left:226.70px;top:416.80px" width="1" height="1" viewBox="0 0 1 1"><circle r="4.7" fill="#fff"/><path d="M0 0L-4.07 -2.35A4.7 4.7 0 0 1 4.07 -2.35Z" fill="#e33b2e"/><path d="M0 0L4.07 -2.35A4.7 4.7 0 0 1 0 4.7Z" fill="#fcc934"/><path d="M0 0L0 4.7A4.7 4.7 0 0 1 -4.07 -2.35Z" fill="#2da94f"/><circle r="2.2" fill="#fff"/><circle r="1.7" fill="#3c7ee8"/></svg>
<svg style="left:247.00px;top:416.70px;will-change:transform" width="1" height="1" viewBox="0 0 1 1"><rect x="-5.3" y="-4.9" width="10.7" height="9.8" fill="#fbe6d2"/><rect x="-5.3" y="-4.9" width="10.7" height="9.8" fill="none" stroke="#fff" stroke-width="0.5"/><text x="0.1" y="3.0" text-anchor="middle" font-family="Liberation Sans, sans-serif" font-weight="700" font-size="8.6" fill="#e0741a">F</text></svg>
<div class="a" id="txt" style="left:0;top:0;width:690px;height:424px;will-change:transform">
<span class="t" id="t0" style="left:18.3px;top:7.66px;font-size:5.28px;font-weight:400;color:#3c4043;letter-spacing:-0.177px;-webkit-text-stroke:0.04px currentColor;-webkit-mask-image:linear-gradient(to right,#000 82%,transparent 100%);mask-image:linear-gradient(to right,#000 82%,transparent 100%);">Tutorial: Compressible Flow Arou</span>
<span class="t" id="t1" style="left:115.6px;top:8.64px;font-size:5.33px;font-weight:400;color:#3c4043;letter-spacing:-0.191px;-webkit-text-stroke:0.04px currentColor;-webkit-mask-image:linear-gradient(to right,#000 82%,transparent 100%);mask-image:linear-gradient(to right,#000 82%,transparent 100%);">Enclosure volume not accurate s</span>
<span class="t" id="t2" style="left:213.8px;top:7.67px;font-size:5.28px;font-weight:400;color:#3c4043;letter-spacing:-0.167px;-webkit-text-stroke:0.04px currentColor;-webkit-mask-image:linear-gradient(to right,#000 82%,transparent 100%);mask-image:linear-gradient(to right,#000 82%,transparent 100%);">Eppler E851 with facet split | Sim</span>
<span class="t" id="t3" style="left:311.0px;top:8.63px;font-size:5.33px;font-weight:400;color:#3c4043;letter-spacing:-0.193px;-webkit-text-stroke:0.04px currentColor;-webkit-mask-image:linear-gradient(to right,#000 82%,transparent 100%);mask-image:linear-gradient(to right,#000 82%,transparent 100%);">CAD Preparation &amp; Upload | Sim</span>
<span class="t" id="t4" style="left:71.8px;top:22.41px;font-size:6.25px;font-weight:400;color:#202124;letter-spacing:-0.238px;-webkit-text-stroke:0.05px currentColor;">simscale.com</span>
<span class="t" id="t5" style="left:106.8px;top:22.47px;font-size:6.13px;font-weight:400;color:#6b6f73;letter-spacing:-0.233px;-webkit-text-stroke:0.03px currentColor;">/workbench/modeller?pid=2595590072613258381&amp;sessionId=155ede7a-94c3-447f-b9ee-6edab8fb6e66</span>
<span class="t" id="t6" style="left:665.6px;top:22.77px;font-size:5.28px;font-weight:700;color:#fff;letter-spacing:-0.309px;-webkit-text-stroke:0;">G</span>
<span class="t" id="t7" style="left:24.2px;top:40.01px;font-size:7.29px;font-weight:700;color:#2a6aa5;letter-spacing:-0.249px;-webkit-text-stroke:0;">Eppler E851 with facet split</span>
<span class="t" id="t8" style="left:498.7px;top:41.33px;font-size:6.21px;font-weight:400;color:#3d3d3d;letter-spacing:-0.251px;">Dashboard</span>
<span class="t" id="t9" style="left:535.8px;top:41.31px;font-size:6.25px;font-weight:400;color:#3d3d3d;letter-spacing:-0.210px;">Public Projects</span>
<span class="t" id="t10" style="left:582.8px;top:41.28px;font-size:6.29px;font-weight:400;color:#3d3d3d;letter-spacing:-0.271px;">Forum</span>
<span class="t" id="t11" style="left:608.3px;top:41.24px;font-size:6.36px;font-weight:400;color:#3d3d3d;letter-spacing:-0.248px;">Help</span>
<span class="t" id="t12" style="left:633.2px;top:42.42px;font-size:6.06px;font-weight:400;color:#3d3d3d;letter-spacing:-0.223px;">gswannell</span>
<span class="t" id="t13" style="left:664.9px;top:36.06px;font-size:13.46px;font-weight:400;color:#fff;letter-spacing:-0.769px;-webkit-text-stroke:0.2px #9ce0a2;">G</span>
<span class="t" id="t14" style="left:614.5px;top:66.24px;font-size:5.84px;font-weight:400;color:#444;letter-spacing:-0.226px;">Cancel</span>
<span class="t" id="t15" style="left:657.3px;top:64.56px;font-size:5.29px;font-weight:700;color:#fff;letter-spacing:-0.194px;-webkit-text-stroke:0;">Finish</span>
<span class="t" id="t16" style="left:6.0px;top:65.27px;font-size:4.40px;font-weight:400;color:#555;letter-spacing:-0.264px;-webkit-text-stroke:0.2px currentColor;">CREATE</span>
<span class="t" id="t17" style="left:69.8px;top:65.25px;font-size:4.43px;font-weight:400;color:#555;letter-spacing:-0.254px;-webkit-text-stroke:0.2px currentColor;">FACE</span>
<span class="t" id="t18" style="left:133.4px;top:66.00px;font-size:4.86px;font-weight:400;color:#555;letter-spacing:-0.320px;-webkit-text-stroke:0.2px currentColor;">BODY</span>
<span class="t" id="t19" style="left:233.6px;top:65.13px;font-size:4.65px;font-weight:400;color:#555;letter-spacing:-0.303px;-webkit-text-stroke:0.2px currentColor;">MODEL</span>
<span class="t" id="t20" style="left:28.2px;top:71.91px;font-size:4.33px;font-weight:400;color:#444;letter-spacing:-0.171px;">Flow Volume</span>
<span class="t" id="t21" style="left:87.3px;top:70.82px;font-size:4.49px;font-weight:400;color:#444;letter-spacing:-0.154px;">Delete</span>
<span class="t" id="t22" style="left:106.0px;top:70.80px;font-size:4.52px;font-weight:400;color:#444;letter-spacing:-0.166px;">Extrude</span>
<span class="t" id="t23" style="left:152.6px;top:70.82px;font-size:4.49px;font-weight:400;color:#444;letter-spacing:-0.154px;">Delete</span>
<span class="t" id="t24" style="left:171.2px;top:72.02px;font-size:4.14px;font-weight:400;color:#444;letter-spacing:-0.153px;">Close Sheet</span>
<span class="t" id="t25" style="left:199.4px;top:70.91px;font-size:4.34px;font-weight:400;color:#444;letter-spacing:-0.170px;">Boolean</span>
<span class="t" id="t26" style="left:254.8px;top:71.93px;font-size:4.29px;font-weight:400;color:#444;letter-spacing:-0.139px;">Facet Split</span>
<span class="t" id="t27" style="left:280.2px;top:70.79px;font-size:4.53px;font-weight:400;color:#444;letter-spacing:-0.145px;">Imprint</span>
<span class="t" id="t28" style="left:301.7px;top:72.11px;font-size:3.98px;font-weight:400;color:#444;letter-spacing:-0.148px;">Scale</span>
<span class="t" id="t29" style="left:322.6px;top:72.16px;font-size:3.89px;font-weight:400;color:#444;letter-spacing:-0.109px;">Split</span>
<span class="t" id="t30" style="left:15.0px;top:91.35px;font-size:6.00px;font-weight:700;color:#333;letter-spacing:-0.278px;-webkit-text-stroke:0;">HISTORY</span>
<span class="t" id="t31" style="left:25.8px;top:104.26px;font-size:6.16px;font-weight:400;color:#3a3a3a;letter-spacing:-0.231px;">Create</span>
<span class="t" id="t32" style="left:25.8px;top:117.00px;font-size:6.09px;font-weight:400;color:#3a3a3a;letter-spacing:-0.193px;">Facet Split</span>
<span class="t" id="t33" style="left:25.8px;top:129.38px;font-size:6.29px;font-weight:400;color:#3a3a3a;letter-spacing:-0.218px;">External flow volume</span>
<span class="t" id="t34" style="left:25.8px;top:141.95px;font-size:6.18px;font-weight:400;color:#3a3a3a;letter-spacing:-0.219px;">Delete bodies</span>
<span class="t" id="t35" style="left:124.9px;top:92.43px;font-size:6.73px;font-weight:700;color:#222;letter-spacing:-0.226px;-webkit-text-stroke:0;">Facet Split</span>
<span class="t" id="t36" style="left:124.9px;top:113.23px;font-size:6.21px;font-weight:400;color:#444;letter-spacing:-0.218px;">Maximum split angle</span>
<span class="t" id="t37" style="left:211.7px;top:113.07px;font-size:6.31px;font-weight:400;color:#4a4a4a;letter-spacing:-0.258px;">30</span>
<span class="t" id="t38" style="left:268.2px;top:113.89px;font-size:5.40px;font-weight:400;color:#555;letter-spacing:-0.156px;">°</span>
<span class="t" id="t39" style="left:246.0px;top:136.27px;font-size:5.44px;font-weight:700;color:#fff;letter-spacing:-0.222px;-webkit-text-stroke:0;">Apply</span>
<span class="t" id="t40" style="left:596.4px;top:91.35px;font-size:6.00px;font-weight:700;color:#333;letter-spacing:-0.316px;-webkit-text-stroke:0;">GEOMETRY</span>
<span class="t" id="t41" style="left:596.4px;top:104.65px;font-size:5.82px;font-weight:700;color:#333;letter-spacing:-0.208px;-webkit-text-stroke:0;">Copy of Copy of E851_chor...</span>
<span class="t" id="t42" style="left:618.0px;top:117.14px;font-size:6.37px;font-weight:400;color:#444;letter-spacing:-0.252px;">E851 chord 110mm</span>
<span class="t" id="t43" style="left:587.7px;top:136.10px;font-size:5.91px;font-weight:400;color:#444;letter-spacing:-0.225px;">Show faces</span>
<span class="t" id="t44" style="left:394.0px;top:394.72px;font-size:6.22px;font-weight:400;color:#3a3a3a;letter-spacing:-0.241px;-webkit-text-stroke:0.05px currentColor;">0.002 m</span>
</div>
<div class="a" style="left:0;top:1px;width:690px;height:1px;background:rgba(255,255,255,.4)"></div>
<div class="a" style="left:0;top:0;width:690px;height:1px;background:rgba(0,0,0,.27)"></div>
<div class="a" style="left:0;top:1px;width:1px;height:408px;background:rgba(0,0,0,.27)"></div>
<div class="a" style="left:688px;top:1px;width:1px;height:408px;background:rgba(255,255,255,.25)"></div>
<div class="a" style="left:689px;top:1px;width:1px;height:408px;background:rgba(0,0,0,.27)"></div>
</body>
</html>
